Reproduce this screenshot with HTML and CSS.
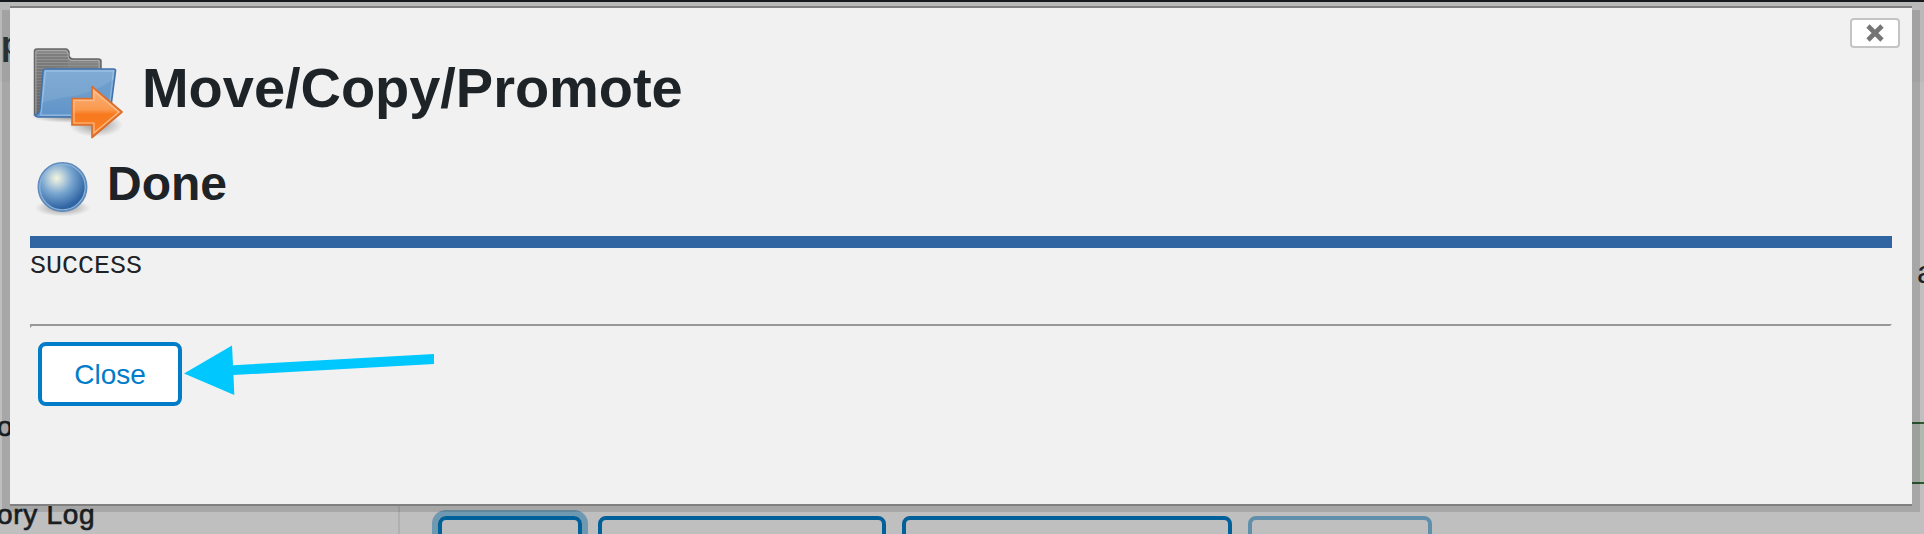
FILE: index.html
```html
<!DOCTYPE html>
<html lang="en">
<head>
<meta charset="utf-8">
<title>Move/Copy/Promote</title>
<link rel="stylesheet" href="styles.css">
</head>
<body>
<div class="page">
  <div class="topbar"></div>
  <div class="band"><span class="band-text">p</span></div>
  <div class="columns">
    <nav class="sidebar">
      <div class="side-item">o</div>
      <div class="side-item log">ory Log</div>
    </nav>
    <main class="content">
      <div class="content-text">a</div>
      <div class="notice"></div>
      <div class="buttons">
        <span class="btn focused"></span>
        <span class="btn wide"></span>
        <span class="btn wider"></span>
        <span class="btn disabled"></span>
      </div>
    </main>
  </div>
</div>
<div class="shadow"></div>
<section class="dialog" role="dialog">
  <button class="dismiss" aria-label="Close dialog">
    <svg width="18" height="18" viewBox="0 0 18 18"><path d="M2 2L16 16M16 2L2 16" stroke="#757575" stroke-width="4.6"/></svg>
  </button>
  <header class="heading">
    <svg class="folder" width="96" height="96" viewBox="0 0 96 96">
      <defs>
        <linearGradient id="back" x1="0" y1="0" x2="0" y2="1"><stop offset="0" stop-color="#999"/><stop offset="1" stop-color="#6c6c6c"/></linearGradient>
        <linearGradient id="front" x1="0" y1="0" x2="0" y2="1"><stop offset="0" stop-color="#7fabd4"/><stop offset=".55" stop-color="#78a5d0"/><stop offset="1" stop-color="#6799cc"/></linearGradient>
        <linearGradient id="arrow" x1="0" y1="0" x2="0" y2="1"><stop offset="0" stop-color="#f9b586"/><stop offset=".45" stop-color="#fa994d"/><stop offset=".55" stop-color="#f8781e"/><stop offset="1" stop-color="#f78427"/></linearGradient>
        <radialGradient id="shade"><stop offset="0" stop-color="#000" stop-opacity=".38"/><stop offset="1" stop-color="#000" stop-opacity="0"/></radialGradient>
        <pattern id="lines" width="4" height="3" patternUnits="userSpaceOnUse"><path d="M0 1H4" stroke="#555" stroke-opacity=".4"/></pattern>
      </defs>
      <ellipse cx="42" cy="78" rx="41" ry="6" fill="url(#shade)"/>
      <ellipse cx="66" cy="86" rx="27" ry="12" fill="url(#shade)"/>
      <path d="M4.500 76V12Q4.500 10 7 10H36Q38 10 39 13V17Q40 20 43 20H68Q71 20 71 22V76Z" fill="url(#back)" stroke="#666" stroke-width="1.500"/>
      <path d="M6 75V13Q6 11.500 8 11.500H35Q37 11.500 38 14V17Q38 21.500 42 21.500H69V60" fill="url(#lines)" stroke="#aaa" stroke-width="1"/>
      <path d="M6 75V14H38V28L16 29L10 75Z" fill="url(#lines)"/>
      <path d="M15.500 30H83.500Q86 30 85.500 32L80 75Q79.500 78 77 78H8Q5 77.500 5 75.500Q9 76 10 70L13 32Q13.500 30 15.500 30Z" fill="url(#front)" stroke="#4272ad" stroke-width="1.600"/>
      <path d="M15.500 32H83.500L78 76H11Z" fill="none" stroke="#9bbfe1" stroke-width="1.300"/>
      <path d="M12 64Q23 60 43 57T83 41L78 76H11Z" fill="#5189c4" opacity=".3"/>
      <path d="M42 59.500H62V47.500L92 73L62 98.500V86H42Z" fill="url(#arrow)" stroke="#d9702f" stroke-width="1.700" stroke-linejoin="round"/>
      <path d="M44 61.500H64V52L89 73L64 94V84H44Z" fill="none" stroke="#fdbd8b" stroke-width="1.200"/>
    </svg>
    <h1>Move/Copy/Promote</h1>
  </header>
  <div class="status">
    <svg class="ball" width="64" height="64" viewBox="0 0 64 64">
      <defs><radialGradient id="glass" cx=".38" cy=".32" r=".62"><stop offset="0" stop-color="#f3f5dd"/><stop offset=".18" stop-color="#cbdbdc"/><stop offset=".52" stop-color="#78a5d0"/><stop offset="1" stop-color="#3065a3"/></radialGradient></defs>
      <ellipse cx="32.500" cy="53" rx="28" ry="8.500" fill="url(#shade)"/>
      <circle cx="32.500" cy="32" r="24.200" fill="url(#glass)" stroke="#5f8abd" stroke-width="1.600"/>
      <circle cx="32.500" cy="32" r="22.800" fill="none" stroke="#8db3d9" stroke-width="1.300"/>
    </svg>
    <h2>Done</h2>
  </div>
  <div class="rule"></div>
  <pre class="result">SUCCESS</pre>
  <hr class="divider">
  <div class="actions">
    <button class="close">Close</button>
    <svg class="pointer" width="252" height="52" viewBox="0 0 252 52"><path d="M0 28.500L48 0.500L49 20.300L250 9V19L49.500 30L50.300 50Z" fill="#00c8ff"/></svg>
  </div>
</section>
</body>
</html>
```
FILE: styles.css
```css
* { box-sizing: border-box; }
html, body { margin: 0; height: 534px; overflow: hidden; }
body { background: #bfbfbf; color: #1d2327; font-family: "Liberation Sans", Arial, sans-serif; }
.page { display: flex; flex-direction: column; height: 534px; overflow: hidden; }
.topbar { height: 2px; flex: none; background: #16191d; }
.band { height: 80px; flex: none; background: #b9b9b9; padding: 21px 0 0 1px; }
.band-text { font-size: 34px; line-height: 40px; font-weight: bold; color: #30363b; }
.columns { display: flex; flex: 1; min-height: 0; }
.sidebar { width: 400px; flex: none; border-right: 2px solid #adb1b4; padding-top: 327px; }
.side-item { font-size: 28px; line-height: 36px; color: #191e23; margin-left: -3px; -webkit-text-stroke: .7px #191e23; }
.log { margin-top: 52px; letter-spacing: .7px; }
.content { flex: 1; padding-left: 38px; }
.content-text { padding-top: 172px; margin-left: 1479px; font-size: 32px; line-height: 36px; height: 340px; }
.notice { margin-left: 1462px; height: 62px; background: #b2b9b1; border: solid #2a5a30; border-width: 2px 0; }
.buttons { display: flex; gap: 16px; padding-top: 32px; }
.btn { flex: none; width: 144px; height: 60px; border: 4px solid #006099; border-radius: 8px; }
.focused { box-shadow: 0 0 0 6px #6f98b1; }
.wide { width: 288px; }
.wider { width: 330px; }
.disabled { width: 184px; border-color: #608fac; }
.shadow { position: absolute; left: 2px; top: 10px; width: 1918px; height: 502px; background: rgba(0,0,0,.12); }
.dialog { position: absolute; left: 10px; top: 6px; width: 1902px; height: 500px; padding: 32px 20px 0; background: #f1f1f1; border: solid #808080; border-width: 2px 0; }
.dismiss { position: absolute; right: 12px; top: 10px; width: 50px; height: 30px; padding: 0; display: flex; align-items: center; justify-content: center; background: #fff; border: 2px solid #c4c4c4; border-radius: 4px; }
.heading { display: flex; height: 108px; }
.folder { flex: none; overflow: visible; margin-top: -1px; }
h1 { margin: 16px 0 0 16px; font-size: 56px; line-height: 64px; letter-spacing: -.04px; }
.status { display: flex; height: 88px; padding-top: 7px; }
h2 { margin: 1px 0 0 13px; font-size: 48px; line-height: 56px; }
.rule { height: 12px; background: #3165a1; }
.result { margin: 0; height: 76px; padding-top: 2px; font: 26.67px/32px "Liberation Mono", "Courier New", monospace; }
.divider { margin: 0; height: 4px; border: 2px solid; border-color: #989898 #f0f0f0 #f0f0f0 #989898; }
.actions { display: flex; padding: 14px 0 0 8px; }
.close { width: 144px; height: 64px; padding: 2px 0 0; border: 4px solid #007cc9; border-radius: 8px; background: #fff; color: #007cc9; font: 28px "Liberation Sans", Arial, sans-serif; }
.pointer { flex: none; margin: 3px 0 0 2px; }
```
